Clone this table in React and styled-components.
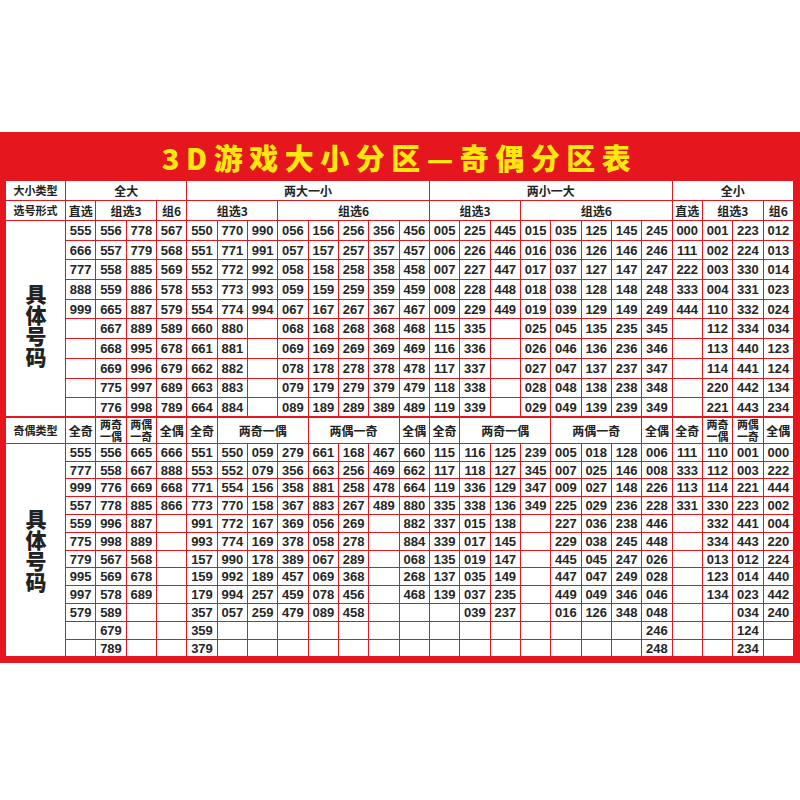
import React from "react";
import styled, { createGlobalStyle } from "styled-components";

const RED = "#e5161d";

const GlobalStyle = createGlobalStyle`
  body {
    margin: 0;
    background: #fff;
    font-family: "Liberation Sans", "Noto Sans CJK SC", sans-serif;
  }
`;

const Page = styled.div`
  width: 800px;
  height: 800px;
  padding-top: 132px;
  box-sizing: border-box;
  background: #fff;
`;

const Board = styled.div`
  background: ${RED};
  padding: 0 6px 6px 5px;
`;

const Title = styled.h1`
  margin: 0;
  height: 48px;
  line-height: 50px;
  text-align: center;
  color: #ffe60f;
  font-family: "Noto Sans CJK SC", sans-serif;
  font-weight: 900;
  font-size: 29px;
  letter-spacing: 6.5px;
  white-space: nowrap;
`;

const Grid = styled.table`
  width: 789px;
  border-collapse: collapse;
  table-layout: fixed;
  background: #fff;
`;

const Row = styled.tr`
  height: ${(p) => p.$h}px;
`;

const Cell = styled.td`
  border: 1px solid ${RED};
  border-top-width: ${(p) => (p.$sep ? 2 : 1)}px;
  padding: 0;
  text-align: center;
  vertical-align: middle;
  color: #262626;
  font-weight: bold;
  font-size: 13px;
  font-family: "Liberation Sans", Arial, sans-serif;
  white-space: nowrap;
  overflow: hidden;
  line-height: 1;
`;

const HeadCell = styled(Cell)`
  font-family: "Noto Sans CJK SC", sans-serif;
  font-size: ${(p) => (p.$small ? 11 : 12)}px;
  line-height: ${(p) => (p.$small ? "11.5px" : "1")};
  white-space: pre-line;
  color: #222;
`;

const LabelCell = styled.td`
  border: 1px solid ${RED};
  padding: ${(p) => p.$offset}px 0 0;
  text-align: center;
  vertical-align: middle;
`;

const VerticalText = styled.span`
  display: inline-block;
  writing-mode: vertical-rl;
  text-orientation: upright;
  font-family: "Noto Sans CJK SC", sans-serif;
  font-size: 21px;
  font-weight: 900;
  line-height: 1;
  color: #222;
`;

const cols = (list) => list.map((s) => s.split(" ").map((v) => (v === "-" ? "" : v)));

const TOP = cols([
  "555 666 777 888 999 - - - - -",
  "556 557 558 559 665 667 668 669 775 776",
  "778 779 885 886 887 889 995 996 997 998",
  "567 568 569 578 579 589 678 679 689 789",
  "550 551 552 553 554 660 661 662 663 664",
  "770 771 772 773 774 880 881 882 883 884",
  "990 991 992 993 994 - - - - -",
  "056 057 058 059 067 068 069 078 079 089",
  "156 157 158 159 167 168 169 178 179 189",
  "256 257 258 259 267 268 269 278 279 289",
  "356 357 358 359 367 368 369 378 379 389",
  "456 457 458 459 467 468 469 478 479 489",
  "005 006 007 008 009 115 116 117 118 119",
  "225 226 227 228 229 335 336 337 338 339",
  "445 446 447 448 449 - - - - -",
  "015 016 017 018 019 025 026 027 028 029",
  "035 036 037 038 039 045 046 047 048 049",
  "125 126 127 128 129 135 136 137 138 139",
  "145 146 147 148 149 235 236 237 238 239",
  "245 246 247 248 249 345 346 347 348 349",
  "000 111 222 333 444 - - - - -",
  "001 002 003 004 110 112 113 114 220 221",
  "223 224 330 331 332 334 440 441 442 443",
  "012 013 014 023 024 034 123 124 134 234",
]);

const BOTTOM = cols([
  "555 777 999 557 559 775 779 995 997 579 - -",
  "556 558 776 778 996 998 567 569 578 589 679 789",
  "665 667 669 885 887 889 568 678 689 - - -",
  "666 888 668 866 - - - - - - - -",
  "551 553 771 773 991 993 157 159 179 357 359 379",
  "550 552 554 770 772 774 990 992 994 057 - -",
  "059 079 156 158 167 169 178 189 257 259 - -",
  "279 356 358 367 369 378 389 457 459 479 - -",
  "661 663 881 883 056 058 067 069 078 089 - -",
  "168 256 258 267 269 278 289 368 456 458 - -",
  "467 469 478 489 - - - - - - - -",
  "660 662 664 880 882 884 068 268 468 - - -",
  "115 117 119 335 337 339 135 137 139 - - -",
  "116 118 336 338 015 017 019 035 037 039 - -",
  "125 127 129 136 138 145 147 149 235 237 - -",
  "239 345 347 349 - - - - - - - -",
  "005 007 009 225 227 229 445 447 449 016 - -",
  "018 025 027 029 036 038 045 047 049 126 - -",
  "128 146 148 236 238 245 247 249 346 348 - -",
  "006 008 226 228 446 448 026 028 046 048 246 248",
  "111 333 113 331 - - - - - - - -",
  "110 112 114 330 332 334 013 123 134 - - -",
  "001 003 221 223 441 443 012 014 023 034 124 234",
  "000 222 444 002 004 220 224 440 442 240 - -",
]);

const SIZE_HEAD = [
  ["全大", 4],
  ["两大一小", 8],
  ["两小一大", 8],
  ["全小", 4],
];

const FORM_HEAD = [
  ["直选", 1], ["组选3", 2], ["组6", 1],
  ["组选3", 3], ["组选6", 5],
  ["组选3", 3], ["组选6", 5],
  ["直选", 1], ["组选3", 2], ["组6", 1],
];

const PARITY_HEAD = [
  ["全奇", 1], ["两奇\n一偶", 1, true], ["两偶\n一奇", 1, true], ["全偶", 1],
  ["全奇", 1], ["两奇一偶", 3], ["两偶一奇", 3], ["全偶", 1],
  ["全奇", 1], ["两奇一偶", 3], ["两偶一奇", 3], ["全偶", 1],
  ["全奇", 1], ["两奇\n一偶", 1, true], ["两偶\n一奇", 1, true], ["全偶", 1],
];

function DataRows({ columns, height, label, offset }) {
  const count = columns[0].length;
  return Array.from({ length: count }, (_, r) => (
    <Row $h={height} key={r}>
      {r === 0 && (
        <LabelCell rowSpan={count} $offset={offset}>
          <VerticalText>{label}</VerticalText>
        </LabelCell>
      )}
      {columns.map((col, c) => (
        <Cell key={c}>{col[r]}</Cell>
      ))}
    </Row>
  ));
}

export default function App() {
  return (
    <>
      <GlobalStyle />
      <Page>
        <Board>
          <Title>3D游戏大小分区—奇偶分区表</Title>
          <Grid>
            <colgroup>
              <col style={{ width: 60 }} />
              {TOP.map((_, i) => (
                <col key={i} />
              ))}
            </colgroup>
            <tbody>
              <Row $h={20}>
                <HeadCell $small>大小类型</HeadCell>
                {SIZE_HEAD.map(([t, n], i) => (
                  <HeadCell key={i} colSpan={n}>{t}</HeadCell>
                ))}
              </Row>
              <Row $h={20}>
                <HeadCell $small>选号形式</HeadCell>
                {FORM_HEAD.map(([t, n], i) => (
                  <HeadCell key={i} colSpan={n}>{t}</HeadCell>
                ))}
              </Row>
              <DataRows columns={TOP} height={19.7} label="具体号码" offset={18} />
              <Row $h={26}>
                <HeadCell $small $sep>奇偶类型</HeadCell>
                {PARITY_HEAD.map(([t, n, small], i) => (
                  <HeadCell key={i} colSpan={n} $small={small} $sep>{t}</HeadCell>
                ))}
              </Row>
              <DataRows columns={BOTTOM} height={17.8} label="具体号码" offset={6} />
            </tbody>
          </Grid>
        </Board>
      </Page>
    </>
  );
}
